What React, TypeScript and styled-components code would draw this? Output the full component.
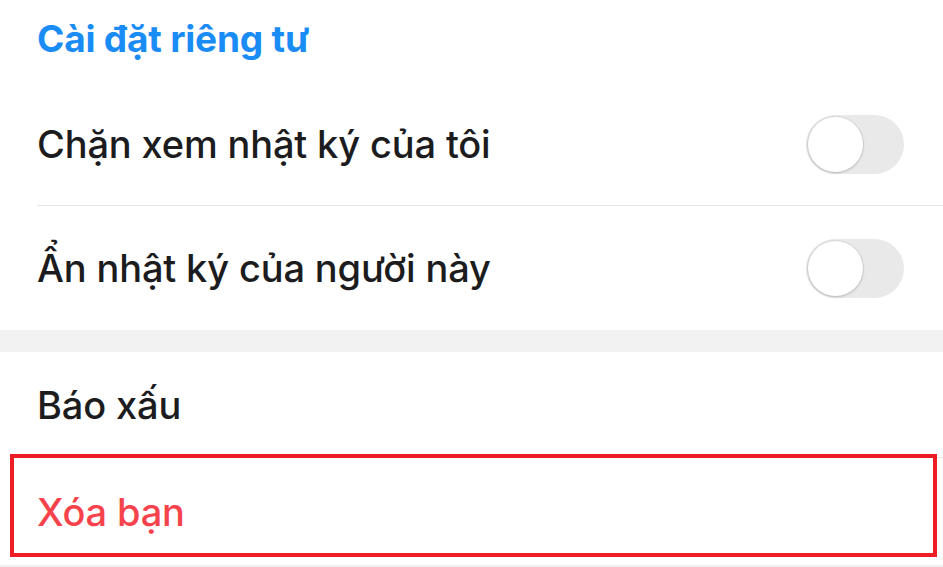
import React from "react";
import styled, { createGlobalStyle } from "styled-components";

const GlobalStyle = createGlobalStyle`
  html, body { margin: 0; padding: 0; background: #ffffff; }
  body { font-family: Inter, "Noto Sans", "Liberation Sans", sans-serif; }
`;

const Page = styled.div`
  width: 943px;
  height: 567px;
  overflow: hidden;
  background: #f0f0f0;
  display: flex;
  flex-direction: column;
`;

const Group = styled.section`
  background: #ffffff;
  display: flex;
  flex-direction: column;
`;

const SectionTitle = styled.h2`
  margin: 0;
  padding: 17px 0 0 37px;
  height: 82px;
  box-sizing: border-box;
  font-size: 37px;
  line-height: 44px;
  font-weight: 700;
  color: #1a8cf5;
  letter-spacing: -0.2px;
`;

const Row = styled.div<{ $h: number; $divider?: boolean }>`
  position: relative;
  height: ${(p) => p.$h}px;
  box-sizing: border-box;
  padding: 0 39px 0 37px;
  display: flex;
  align-items: center;
  justify-content: space-between;
  &::after {
    content: "";
    display: ${(p) => (p.$divider ? "block" : "none")};
    position: absolute;
    left: 37px;
    right: 0;
    bottom: 0;
    height: 1px;
    background: #e6e6e6;
  }
`;

const Label = styled.span<{ $danger?: boolean }>`
  font-size: 38px;
  font-weight: 500;
  color: ${(p) => (p.$danger ? "#f6434b" : "#1c1c1e")};
  letter-spacing: -0.15px;
`;

const Gap = styled.div`
  height: 22px;
  background: #f2f2f2;
`;

const Track = styled.div`
  width: 98px;
  height: 59px;
  border-radius: 30px;
  background: #e9e9ea;
  position: relative;
  flex: none;
`;

const Knob = styled.div`
  position: absolute;
  left: 2px;
  top: 2px;
  width: 55px;
  height: 55px;
  border-radius: 50%;
  background: #ffffff;
  box-shadow: 0 1px 3px rgba(0, 0, 0, 0.18), 0 0 0 1px rgba(0, 0, 0, 0.05);
`;

const Highlight = styled.div`
  position: absolute;
  left: 10px;
  right: 6px;
  top: -4px;
  height: 103px;
  box-sizing: border-box;
  border: 4px solid #ee1c25;
  pointer-events: none;
`;

const Toggle = () => (
  <Track>
    <Knob />
  </Track>
);

export default function App() {
  return (
    <Page>
      <GlobalStyle />
      <Group>
        <SectionTitle>Cài đặt riêng tư</SectionTitle>
        <Row $h={124} $divider>
          <Label>Chặn xem nhật ký của tôi</Label>
          <Toggle />
        </Row>
        <Row $h={124}>
          <Label>Ẩn nhật ký của người này</Label>
          <Toggle />
        </Row>
      </Group>
      <Gap />
      <Group>
        <Row $h={106} $divider>
          <Label>Báo xấu</Label>
        </Row>
        <Row $h={107}>
          <Label $danger>Xóa bạn</Label>
          <Highlight />
        </Row>
      </Group>
    </Page>
  );
}
